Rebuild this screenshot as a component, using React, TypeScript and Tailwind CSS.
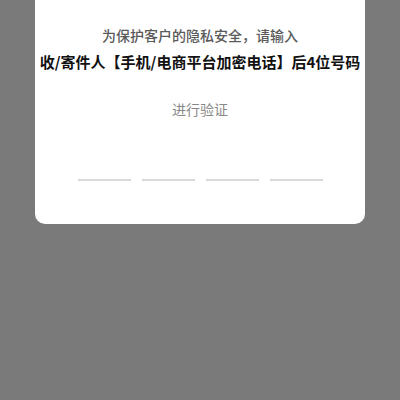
export default function App() {
    const slots = [0, 1, 2, 3];
    return (
        <div
            className="w-[400px] h-[400px] bg-[#7a7a7a] px-[35px]"
            style={{ fontFamily: '"Noto Sans CJK SC", "Liberation Sans", sans-serif' }}
        >
            <div className="bg-white rounded-b-[10px] pt-[25px] pb-[43px] flex flex-col items-center">
                <p className="text-[14px] leading-[20px] font-medium text-[#5a5a5a]">为保护客户的隐私安全，请输入</p>
                <p className="mt-[6px] text-[15px] leading-[22px] font-bold text-[#111111]">
                    收/寄件人【手机/电商平台加密电话】后4位号码
                </p>
                <p className="mt-[26px] text-[14px] leading-[20px] text-[#888888]">进行验证</p>
                <div className="mt-[60px] flex gap-[11px]">
                    {slots.map((i) => (
                        <div key={i} className="w-[53px] h-[2px] bg-[#d9d9d9]" />
                    ))}
                </div>
            </div>
        </div>
    );
}
